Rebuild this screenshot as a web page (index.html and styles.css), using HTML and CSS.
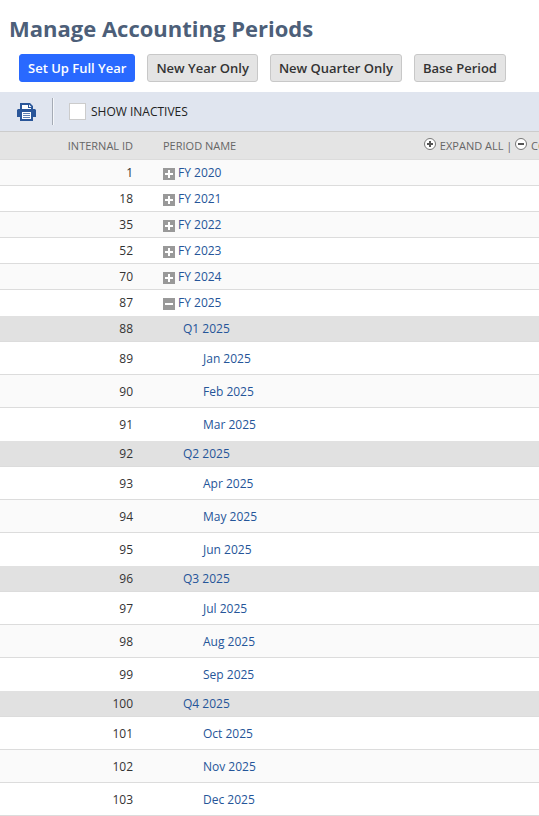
FILE: index.html
```html
<!DOCTYPE html>
<html lang="en">
<head>
  <meta charset="UTF-8">
  <meta name="viewport" content="width=device-width, initial-scale=1">
  <title>Manage Accounting Periods</title>
  <link rel="stylesheet" href="styles.css">
</head>
<body>
  <h1>Manage Accounting Periods</h1>

  <div class="buttons">
    <button type="button" class="btn primary">Set Up Full Year</button>
    <button type="button" class="btn">New Year Only</button>
    <button type="button" class="btn">New Quarter Only</button>
    <button type="button" class="btn">Base Period</button>
  </div>

  <!-- Toolbar: print + inactive filter -->
  <div class="toolbar">
    <button type="button" class="print" aria-label="Print">
      <svg width="19" height="18" viewBox="0 0 19 18">
        <path d="M3 0h10l3 3v3h2l1 1v7h-3v4H3v-4H0V7l1-1h2z" fill="#2a5699"/>
        <path d="M5 2h6v3h3v1H5z" fill="#fff"/>
        <path d="M12 1.500l2.500 2.500H12z" fill="#fff"/>
        <path d="M5 9h9v7H5z" fill="#fff"/>
        <path d="M6 10h7v1H6zM6 12h7v1H6zM6 14h7v1H6z" fill="#5f80b3"/>
      </svg>
    </button>
    <span class="divider"></span>
    <input type="checkbox" id="inactives" class="check">
    <label for="inactives">SHOW INACTIVES</label>
  </div>

  <div class="list">
    <table>
      <thead>
        <tr>
          <th class="id">INTERNAL ID</th>
          <th class="name">PERIOD NAME</th>
          <th class="tools">
            <a href="#"><svg width="13" height="12" viewBox="0 0 13 12"><circle cx="6" cy="6" r="5.500" fill="#fff" stroke="#777"/><path d="M3 5h2V3h2v2h2v2H7v2H5V7H3z" fill="#555"/></svg> EXPAND ALL</a>
            | <a href="#"><svg width="13" height="12" viewBox="0 0 13 12"><circle cx="6" cy="6" r="5.500" fill="#fff" stroke="#777"/><path d="M3 5h6v2H3z" fill="#555"/></svg> COLLAPSE ALL</a>
          </th>
        </tr>
      </thead>
      <tbody>
        <tr><td class="id">1</td><td colspan="2"><button type="button" class="toggle" aria-label="Expand"></button><a href="#">FY 2020</a></td></tr>
        <tr><td class="id">18</td><td colspan="2"><button type="button" class="toggle" aria-label="Expand"></button><a href="#">FY 2021</a></td></tr>
        <tr><td class="id">35</td><td colspan="2"><button type="button" class="toggle" aria-label="Expand"></button><a href="#">FY 2022</a></td></tr>
        <tr><td class="id">52</td><td colspan="2"><button type="button" class="toggle" aria-label="Expand"></button><a href="#">FY 2023</a></td></tr>
        <tr><td class="id">70</td><td colspan="2"><button type="button" class="toggle" aria-label="Expand"></button><a href="#">FY 2024</a></td></tr>
        <tr><td class="id">87</td><td colspan="2"><button type="button" class="toggle open" aria-label="Collapse"></button><a href="#">FY 2025</a></td></tr>
        <tr class="quarter"><td class="id">88</td><td colspan="2"><a href="#">Q1 2025</a></td></tr>
        <tr class="month"><td class="id">89</td><td colspan="2"><a href="#">Jan 2025</a></td></tr>
        <tr class="month"><td class="id">90</td><td colspan="2"><a href="#">Feb 2025</a></td></tr>
        <tr class="month"><td class="id">91</td><td colspan="2"><a href="#">Mar 2025</a></td></tr>
        <tr class="quarter"><td class="id">92</td><td colspan="2"><a href="#">Q2 2025</a></td></tr>
        <tr class="month"><td class="id">93</td><td colspan="2"><a href="#">Apr 2025</a></td></tr>
        <tr class="month"><td class="id">94</td><td colspan="2"><a href="#">May 2025</a></td></tr>
        <tr class="month"><td class="id">95</td><td colspan="2"><a href="#">Jun 2025</a></td></tr>
        <tr class="quarter"><td class="id">96</td><td colspan="2"><a href="#">Q3 2025</a></td></tr>
        <tr class="month"><td class="id">97</td><td colspan="2"><a href="#">Jul 2025</a></td></tr>
        <tr class="month"><td class="id">98</td><td colspan="2"><a href="#">Aug 2025</a></td></tr>
        <tr class="month"><td class="id">99</td><td colspan="2"><a href="#">Sep 2025</a></td></tr>
        <tr class="quarter"><td class="id">100</td><td colspan="2"><a href="#">Q4 2025</a></td></tr>
        <tr class="month"><td class="id">101</td><td colspan="2"><a href="#">Oct 2025</a></td></tr>
        <tr class="month"><td class="id">102</td><td colspan="2"><a href="#">Nov 2025</a></td></tr>
        <tr class="month"><td class="id">103</td><td colspan="2"><a href="#">Dec 2025</a></td></tr>
      </tbody>
    </table>
  </div>
</body>
</html>
```

FILE: styles.css
```css
* {
  box-sizing: border-box;
}
body {
  margin: 0;
  background: #fff;
  color: #333;
  font-family: "Open Sans", "Noto Sans", sans-serif;
  font-size: 12px;
}
h1 {
  margin: 0;
  padding: 13px 9px 11px;
  font-size: 22px;
  line-height: 30px;
  color: #4d5f79;
}
a {
  color: #255599;
  text-decoration: none;
}

/* Action buttons */
.buttons {
  display: flex;
  gap: 12px;
  padding: 0 19px 10px;
}
.btn {
  height: 28px;
  padding: 0 8px;
  border: 1px solid #c8c8c8;
  border-radius: 3px;
  background: #e4e4e4;
  color: #333;
  font-family: inherit;
  font-size: 13px;
  font-weight: 600;
  white-space: nowrap;
  cursor: pointer;
}
.btn.primary {
  border-color: #2969ff;
  background: #2969ff;
  color: #fff;
}

/* Toolbar */
.toolbar {
  display: flex;
  align-items: center;
  height: 40px;
  padding-left: 17px;
  border-bottom: 1px solid #ccc;
  background: #e0e5ef;
  color: #222;
}
.print {
  display: flex;
  padding: 0;
  border: 0;
  background: none;
  cursor: pointer;
}
.divider {
  width: 2px;
  height: 27px;
  margin: 0 15px 0 16px;
  border-left: 1px solid #a5abb5;
  border-right: 1px solid #f5f7fa;
}
.check {
  appearance: none;
  width: 17px;
  height: 17px;
  margin: 0 5px 0 0;
  border: 1px solid #ccc;
  background: #fff;
}
.check:checked {
  background: #2969ff;
}

/* Period list */
.list {
  overflow: hidden;
}
table {
  width: 100%;
  min-width: 620px;
  table-layout: fixed;
  border-collapse: separate;
  border-spacing: 0;
}
th,
td {
  height: 26px;
  padding: 0 0 0 20px;
  border-bottom: 1px solid #dcdcdc;
  line-height: 17px;
  text-align: left;
  white-space: nowrap;
}
th {
  height: 28px;
  background: #e4e4e4;
  color: #666;
  font-size: 11px;
  font-weight: normal;
}
th.id,
td.id {
  width: 143px;
  padding: 0 10px 0 0;
  text-align: right;
}
.name {
  width: 281px;
}
.tools {
  padding-left: 0;
}
.tools a {
  color: #666;
}
tbody tr:nth-child(odd) {
  background: #fafafa;
}
tbody tr.quarter {
  background: #e1e1e1;
}
/* no line directly above a quarter band */
tr:has(+ .quarter) td {
  border-bottom-color: transparent;
}
.quarter td + td {
  padding-left: 40px;
}
.month td {
  height: 33px;
}
.month td + td {
  padding-left: 60px;
}

/* Plus / minus box */
.toggle {
  width: 12px;
  height: 12px;
  margin: 0 3px 0 0;
  padding: 0;
  border: 0;
  background:
    linear-gradient(#fff, #fff) center / 8px 2px no-repeat,
    linear-gradient(#fff, #fff) center / 2px 8px no-repeat,
    #999;
  vertical-align: -3px;
  cursor: pointer;
}
.toggle.open {
  background: linear-gradient(#fff, #fff) center / 8px 2px no-repeat, #999;
}
```
